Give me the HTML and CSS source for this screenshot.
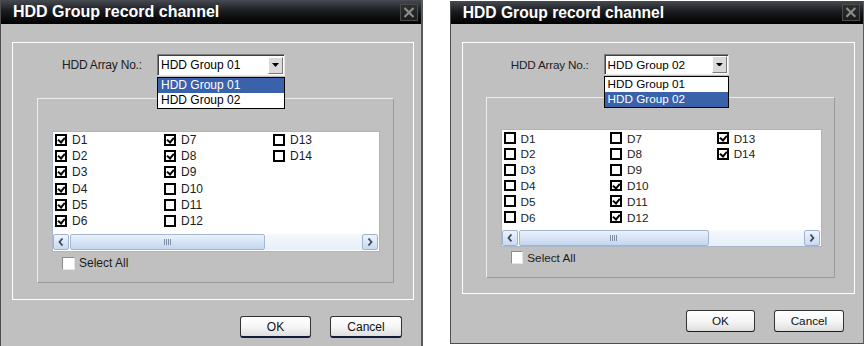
FILE: index.html
```html
<!DOCTYPE html>
<html lang="en">
<head>
  <meta charset="UTF-8" />
  <title>HDD Group record channel</title>
  <link rel="stylesheet" href="styles.css">
</head>
<body>
  <div class="screen">

    <div class="dialog">
      <div class="titlebar">
        <span class="title">HDD Group record channel</span>
        <span class="close"><svg width="12" height="11" viewBox="0 0 12 11"><path d="M1.5 1 L10.5 10 M10.5 1 L1.5 10" stroke="#8c8c8c" stroke-width="2.2" fill="none"/></svg></span>
      </div>
      <div class="dialog-body">
        <div class="frame-outer">
          <div class="array-row">
            <span class="array-label">HDD Array No.:</span>
            <div class="combo">
              <span class="combo-value">HDD Group 01</span>
              <span class="combo-btn"><svg width="7" height="4" viewBox="0 0 7 4"><path d="M0 0 H7 L3.5 4 Z" fill="#000"/></svg></span>
              <ul class="combo-list">
                <li class="sel">HDD Group 01</li>
                <li>HDD Group 02</li>
              </ul>
            </div>
          </div>
          <div class="frame-inner">
            <div class="chan-list">
              <div class="chan-grid">
                <div class="chan"><span class="box on"></span>D1</div>
                <div class="chan"><span class="box on"></span>D2</div>
                <div class="chan"><span class="box on"></span>D3</div>
                <div class="chan"><span class="box on"></span>D4</div>
                <div class="chan"><span class="box on"></span>D5</div>
                <div class="chan"><span class="box on"></span>D6</div>
                <div class="chan"><span class="box on"></span>D7</div>
                <div class="chan"><span class="box on"></span>D8</div>
                <div class="chan"><span class="box on"></span>D9</div>
                <div class="chan"><span class="box"></span>D10</div>
                <div class="chan"><span class="box"></span>D11</div>
                <div class="chan"><span class="box"></span>D12</div>
                <div class="chan"><span class="box"></span>D13</div>
                <div class="chan"><span class="box"></span>D14</div>
              </div>
              <div class="hscroll">
                <span class="sb-btn"><svg width="6" height="8" viewBox="0 0 6 8"><path d="M4.5 0.5 L1.5 4 L4.5 7.5" stroke="#3c4a60" stroke-width="1.8" fill="none"/></svg></span>
                <span class="sb-thumb"><span class="grip"></span></span>
                <span class="sb-track"></span>
                <span class="sb-btn"><svg width="6" height="8" viewBox="0 0 6 8"><path d="M1.5 0.5 L4.5 4 L1.5 7.5" stroke="#3c4a60" stroke-width="1.8" fill="none"/></svg></span>
              </div>
            </div>
            <div class="select-all"><span class="plain-box"></span>Select All</div>
          </div>
        </div>
        <div class="buttons">
          <button class="btn">OK</button>
          <button class="btn wide">Cancel</button>
        </div>
      </div>
    </div>

    <div class="dialog small">
      <div class="titlebar">
        <span class="title">HDD Group record channel</span>
        <span class="close"><svg width="12" height="11" viewBox="0 0 12 11"><path d="M1.5 1 L10.5 10 M10.5 1 L1.5 10" stroke="#8c8c8c" stroke-width="2.2" fill="none"/></svg></span>
      </div>
      <div class="dialog-body">
        <div class="frame-outer">
          <div class="array-row">
            <span class="array-label">HDD Array No.:</span>
            <div class="combo">
              <span class="combo-value">HDD Group 02</span>
              <span class="combo-btn"><svg width="7" height="4" viewBox="0 0 7 4"><path d="M0 0 H7 L3.5 4 Z" fill="#000"/></svg></span>
              <ul class="combo-list">
                <li>HDD Group 01</li>
                <li class="sel">HDD Group 02</li>
              </ul>
            </div>
          </div>
          <div class="frame-inner">
            <div class="chan-list">
              <div class="chan-grid">
                <div class="chan"><span class="box"></span>D1</div>
                <div class="chan"><span class="box"></span>D2</div>
                <div class="chan"><span class="box"></span>D3</div>
                <div class="chan"><span class="box"></span>D4</div>
                <div class="chan"><span class="box"></span>D5</div>
                <div class="chan"><span class="box"></span>D6</div>
                <div class="chan"><span class="box"></span>D7</div>
                <div class="chan"><span class="box"></span>D8</div>
                <div class="chan"><span class="box"></span>D9</div>
                <div class="chan"><span class="box on"></span>D10</div>
                <div class="chan"><span class="box on"></span>D11</div>
                <div class="chan"><span class="box on"></span>D12</div>
                <div class="chan"><span class="box on"></span>D13</div>
                <div class="chan"><span class="box on"></span>D14</div>
              </div>
              <div class="hscroll">
                <span class="sb-btn"><svg width="6" height="8" viewBox="0 0 6 8"><path d="M4.5 0.5 L1.5 4 L4.5 7.5" stroke="#3c4a60" stroke-width="1.8" fill="none"/></svg></span>
                <span class="sb-thumb"><span class="grip"></span></span>
                <span class="sb-track"></span>
                <span class="sb-btn"><svg width="6" height="8" viewBox="0 0 6 8"><path d="M1.5 0.5 L4.5 4 L1.5 7.5" stroke="#3c4a60" stroke-width="1.8" fill="none"/></svg></span>
              </div>
            </div>
            <div class="select-all"><span class="plain-box"></span>Select All</div>
          </div>
        </div>
        <div class="buttons">
          <button class="btn">OK</button>
          <button class="btn wide">Cancel</button>
        </div>
      </div>
    </div>

  </div>
</body>
</html>
```

FILE: styles.css
```css
* {
  box-sizing: border-box;
}

body {
  margin: 0;
  background: #fff;
  font-family: "Liberation Sans", Arial, sans-serif;
  font-size: 12px;
  color: #1c1c1c;
  overflow: hidden;
}

.screen {
  display: flex;
  align-items: flex-start;
  gap: 27px;
  height: 346px;
  overflow: hidden;
}

.dialog {
  flex: none;
  width: 423px;
  background: #c0c0c0;
  border-left: 1px solid #4e4e4e;
  border-right: 2px solid #5a5a5a;
  border-bottom: 1px solid #4e4e4e;
}

/* the second shot is a touch smaller */
.dialog.small {
  zoom: 0.978;
  margin-top: 1px;
}

.dialog.small .box {
  border-width: 2.1px;
}

.dialog.small .box.on::after {
  border-width: 0 2.1px 2.1px 0;
}

.titlebar {
  height: 24px;
  display: flex;
  align-items: center;
  justify-content: space-between;
  padding: 0 3px 0 12px;
  background: linear-gradient(#474b52, #1a1c20 45%, #000);
}

.title {
  color: #fff;
  font-weight: bold;
  font-size: 16px;
  line-height: 24px;
}

.close {
  width: 18px;
  height: 17px;
  display: flex;
  align-items: center;
  justify-content: center;
  background: linear-gradient(#2e2f31, #1b1c1d);
  border: 1px solid #4c4c4c;
}

.dialog-body {
  height: 326px;
  padding: 18px 0 0 11px;
}

.frame-outer {
  width: 402px;
  height: 258px;
  border: 1px solid #fff;
  padding-top: 11px;
}

.array-row {
  display: flex;
  align-items: center;
  height: 22px;
  padding-left: 49px;
}

.array-label {
  width: 95px;
  letter-spacing: -0.2px;
  color: #202020;
}

.combo {
  position: relative;
  width: 128px;
  height: 22px;
  display: flex;
  align-items: center;
  justify-content: space-between;
  padding: 0 1px 0 3px;
  background: #fff;
  border: 1px solid;
  border-color: #7c7c7c #e8e8e8 #e8e8e8 #7c7c7c;
  box-shadow: inset 1px 1px 0 #404040;
}

.combo-value {
  color: #000;
}

.combo-btn {
  width: 15px;
  height: 17px;
  display: flex;
  align-items: center;
  justify-content: center;
  background: #dadada;
  border: 1px solid;
  border-color: #fff #7a7a7a #7a7a7a #fff;
}

.combo-list {
  position: absolute;
  top: 22px;
  left: -1px;
  width: 128px;
  margin: 0;
  padding: 0;
  list-style: none;
  background: #fff;
  border: 1px solid #000;
  z-index: 2;
}

.combo-list li {
  height: 15px;
  line-height: 15px;
  padding-left: 3px;
  color: #000;
}

.combo-list li.sel {
  background: #3962aa;
  color: #fff;
}

.frame-inner {
  width: 357px;
  height: 185px;
  margin: 22px 0 0 24px;
  border: 1px solid;
  border-color: #ececec #9a9a9a #9a9a9a #ececec;
}

.chan-list {
  width: 328px;
  height: 121px;
  margin: 32px 0 0 14px;
  background: #fff;
  border: 1px solid #aab6c6;
}

.chan-grid {
  display: grid;
  grid-template-columns: repeat(3, 109px);
  grid-template-rows: repeat(6, 16.2px);
  grid-auto-flow: column;
  height: 102px;
  padding-left: 2px;
}

.chan {
  display: flex;
  align-items: center;
  gap: 5px;
  color: #1c1c1c;
}

.box {
  position: relative;
  width: 12px;
  height: 12px;
  border: 2px solid #000;
  background: #fff;
}

.box.on::after {
  content: "";
  position: absolute;
  left: 2px;
  top: 0;
  width: 3px;
  height: 5px;
  border: solid #000;
  border-width: 0 2px 2px 0;
  transform: rotate(40deg);
}

.hscroll {
  display: flex;
  height: 17px;
  padding: 0 1px 1px 0;
}

.sb-btn {
  width: 16px;
  display: flex;
  align-items: center;
  justify-content: center;
  background: linear-gradient(#eef4fc, #c9daf0);
  border: 1px solid #9fb3cf;
  border-radius: 2px;
}

.sb-thumb {
  width: 195px;
  margin-left: 1px;
  display: flex;
  align-items: center;
  justify-content: center;
  background: linear-gradient(#eaf2fc, #c4d6ee);
  border: 1px solid #a3b7d2;
  border-radius: 2px;
}

.grip {
  width: 7px;
  height: 6px;
  background: repeating-linear-gradient(90deg, #7d8da5 0 1px, transparent 1px 2px);
}

.sb-track {
  flex: 1;
  background: linear-gradient(#f6f9fd, #e6eef8);
}

.select-all {
  display: flex;
  align-items: center;
  gap: 4px;
  margin: 4px 0 0 24px;
  color: #1c1c1c;
}

.plain-box {
  width: 13px;
  height: 13px;
  background: #fff;
  border: 1px solid;
  border-color: #8c8c8c #e4e4e4 #e4e4e4 #8c8c8c;
}

.buttons {
  display: flex;
  justify-content: flex-end;
  gap: 19px;
  margin-top: 16px;
  padding-right: 19px;
}

.btn {
  width: 71px;
  height: 22px;
  padding: 0;
  font-family: "Liberation Sans", Arial, sans-serif;
  font-size: 12px;
  color: #111;
  background: linear-gradient(#fff, #f6f6f6 50%, #dedede);
  border: 1px solid #333;
  border-bottom: 2px solid #141a3c;
  border-radius: 3px;
}

.btn.wide {
  width: 72px;
}
```
